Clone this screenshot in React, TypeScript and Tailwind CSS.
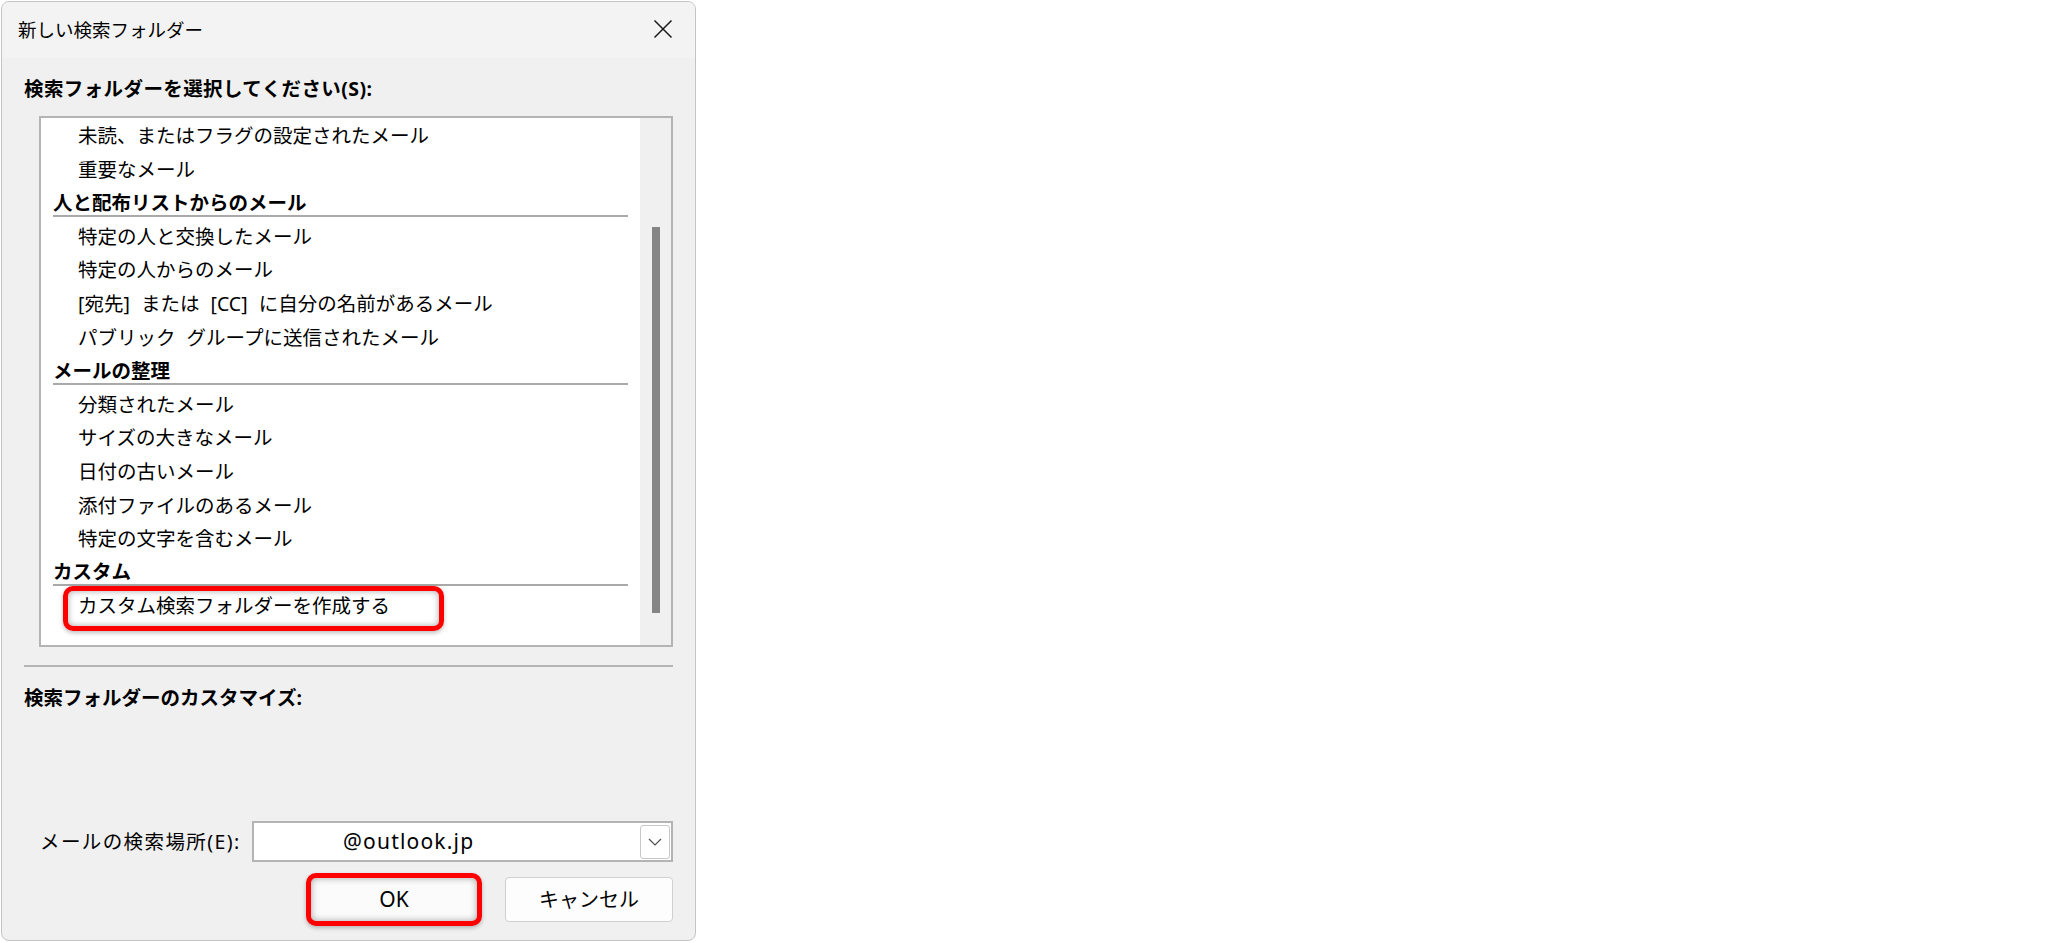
import React from "react";

const FONT = { fontFamily: '"Noto Sans", "Noto Sans CJK JP", sans-serif' };

type Row = { kind: "item" | "header"; text: string; highlight?: boolean };

const rows: Row[] = [
  { kind: "item", text: "未読、またはフラグの設定されたメール" },
  { kind: "item", text: "重要なメール" },
  { kind: "header", text: "人と配布リストからのメール" },
  { kind: "item", text: "特定の人と交換したメール" },
  { kind: "item", text: "特定の人からのメール" },
  { kind: "item", text: "[宛先] または [CC] に自分の名前があるメール" },
  { kind: "item", text: "パブリック グループに送信されたメール" },
  { kind: "header", text: "メールの整理" },
  { kind: "item", text: "分類されたメール" },
  { kind: "item", text: "サイズの大きなメール" },
  { kind: "item", text: "日付の古いメール" },
  { kind: "item", text: "添付ファイルのあるメール" },
  { kind: "item", text: "特定の文字を含むメール" },
  { kind: "header", text: "カスタム" },
  { kind: "item", text: "カスタム検索フォルダーを作成する", highlight: true },
];

function ListRow({ row }: { row: Row }) {
  if (row.kind === "header") {
    return (
      <div className="h-[33.6px] flex flex-col">
        <div className="flex-1 flex items-center pt-[4px] text-[19.5px] font-bold leading-none text-black">
          {row.text}
        </div>
        <div className="h-[2px] bg-[#a9a9a9] mb-[3px]" />
      </div>
    );
  }
  return (
    <div className="relative h-[33.6px] flex items-center pl-[25px] text-[19.5px] leading-none text-black [word-spacing:6px]">
      {row.highlight && (
        <div className="absolute left-[10px] top-[-3px] w-[381px] h-[45px] rounded-[10px] border-[5px] border-[#ff0000] shadow-[inset_0_0_6px_rgba(0,0,0,0.35),0_2px_4px_rgba(0,0,0,0.25)]" />
      )}
      <span className="relative">{row.text}</span>
    </div>
  );
}

export default function App() {
  return (
    <div className="w-[2048px] h-[943px] bg-white overflow-hidden" style={FONT}>
      <div className="ml-[1px] mt-[1px] w-[695px] h-[940px] rounded-[8px] border border-[#c4c4c4] bg-[#f0f0f0] flex flex-col overflow-hidden">
        {/* Title bar */}
        <div className="h-[56px] shrink-0 bg-[#f3f3f3] flex items-center justify-between pl-[16px] pr-[22px]">
          <span className="text-[18.5px] text-black leading-none">新しい検索フォルダー</span>
          <svg width="20" height="20" viewBox="0 0 20 20" className="mt-[-2px]">
            <path d="M1.5 1.5 L18.5 18.5 M18.5 1.5 L1.5 18.5" stroke="#1a1a1a" strokeWidth="1.5" fill="none" />
          </svg>
        </div>

        {/* Body */}
        <div className="flex-1 flex flex-col px-[22px] pb-[18px]">
          <div className="mt-[18px] h-[26px] flex items-center text-[19.5px] font-bold text-black leading-none tracking-[0.4px]">
            検索フォルダーを選択してください(S):
          </div>

          {/* List box */}
          <div className="mt-[14px] ml-[15px] h-[531px] border-2 border-[#b4b4b4] bg-white flex">
            <div className="flex-1 px-[12px] pt-[1px]">
              {rows.map((r, i) => (
                <ListRow key={i} row={r} />
              ))}
            </div>
            <div className="w-[31px] bg-[#f0f0f0] flex flex-col items-center">
              <div className="mt-[109px] h-[386px] w-[8px] bg-[#858585]" />
            </div>
          </div>

          <div className="mt-[18px] h-[2px] bg-[#b5b5b5]" />

          <div className="mt-[18px] h-[26px] flex items-center text-[19.5px] font-bold text-black leading-none">
            検索フォルダーのカスタマイズ:
          </div>

          {/* Combo row */}
          <div className="mt-auto flex items-center justify-between pl-[16px]">
            <span className="text-[19.5px] text-black leading-none whitespace-nowrap tracking-[1.4px]">メールの検索場所(E):</span>
            <div className="w-[421px] h-[41px] bg-white border-2 border-[#b4b4b4] flex items-center justify-between pr-[1px]">
              <span className="pl-[89px] text-[21px] text-black leading-none tracking-[1.2px]">@outlook.jp</span>
              <div className="w-[30px] h-[34px] border border-[#c8c8c8] rounded-[3px] bg-white flex items-center justify-center">
                <svg width="14" height="8" viewBox="0 0 14 8">
                  <path d="M1 1 L7 7 L13 1" stroke="#505050" strokeWidth="1.2" fill="none" />
                </svg>
              </div>
            </div>
          </div>

          {/* Buttons */}
          <div className="mt-[15px] flex justify-end gap-[27px]">
            <div className="relative w-[168px] h-[45px]">
              <div className="absolute -inset-[4px] rounded-[10px] border-[5px] border-[#ff0000] bg-[#fbfbfb] shadow-[inset_0_0_7px_rgba(0,0,0,0.35),0_2px_4px_rgba(0,0,0,0.25)]" />
              <div className="relative h-full flex items-center justify-center text-[21px] text-black leading-none">OK</div>
            </div>
            <div className="w-[168px] h-[45px] rounded-[4px] border border-[#d0d0d0] bg-[#fdfdfd] flex items-center justify-center text-[20px] text-black leading-none">
              キャンセル
            </div>
          </div>
        </div>
      </div>
    </div>
  );
}
